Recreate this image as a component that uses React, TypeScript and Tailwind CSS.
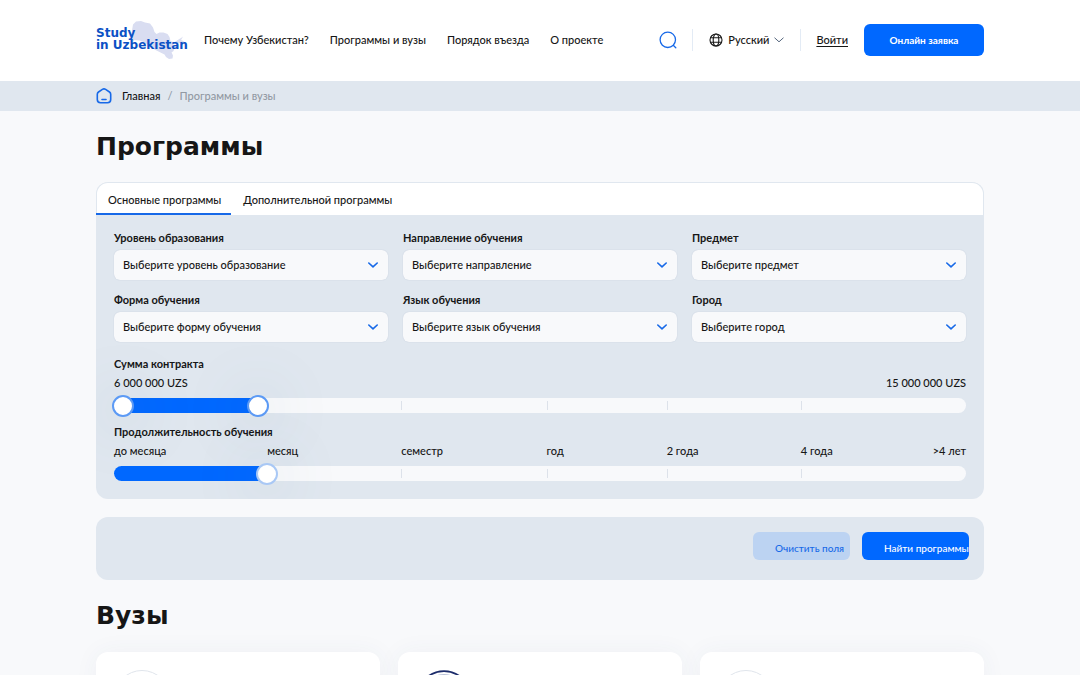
import { useState } from "react";
import type { ReactNode } from "react";

const NAV_LINKS = ["Почему Узбекистан?", "Программы и вузы", "Порядок въезда", "О проекте"];

const FILTERS = [
  { id: "level", label: "Уровень образования", placeholder: "Выберите уровень образование" },
  { id: "direction", label: "Направление обучения", placeholder: "Выберите направление" },
  { id: "subject", label: "Предмет", placeholder: "Выберите предмет" },
  { id: "form", label: "Форма обучения", placeholder: "Выберите форму обучения" },
  { id: "language", label: "Язык обучения", placeholder: "Выберите язык обучения" },
  { id: "city", label: "Город", placeholder: "Выберите город" },
];

const TABS = ["Основные программы", "Дополнительной программы"];

const SCALE = "grid grid-cols-[153fr_134fr_145fr_120fr_134fr_165fr]";

const RANGE =
  "pointer-events-none absolute -left-0.5 top-1/2 m-0 h-[22px] w-[calc(100%+4px)] -translate-y-1/2 appearance-none bg-transparent [&::-webkit-slider-thumb]:pointer-events-auto [&::-webkit-slider-thumb]:size-[22px] [&::-webkit-slider-thumb]:appearance-none [&::-webkit-slider-thumb]:rounded-full [&::-webkit-slider-thumb]:border-2 [&::-webkit-slider-thumb]:bg-white [&::-webkit-slider-thumb]:shadow-[0_4px_60px_rgba(90,120,150,0.4)]";

function Logo() {
  return (
    <a href="#" className="relative block h-10 w-[90px] font-['DejaVu_Sans',sans-serif] text-xs leading-3 font-bold text-[#0b51c5]">
      <svg viewBox="0 0 90 40" className="absolute inset-0 h-full w-full" fill="#d9ddf1" aria-hidden="true">
        <path d="M37 4.500 40 1.500l5-.5 4 1.500 5 1 3 4 1.500 4.500 2 2 3-1.500 4 0 4 1.500 2 3 1 4 3.500 1.500 3-2 4-2.500 2-1.500-2 3.500 3.500 1.500-5 1.500-5 .5-2 2 2 2.500-1 3-2 1.500 1.500 3-.5 3-3.500.5-3-2-1.500-2.500-5-2.500-5-2.500-6-4.500-5-3-4-1.500-5-.5-1.500 1.500-2-5Z" />
      </svg>
      <span className="relative block pt-[7px] whitespace-nowrap">
        Study
        <br />
        in Uzbekistan
      </span>
    </a>
  );
}

function SearchIcon() {
  return (
    <svg viewBox="0 0 18 18" className="size-[18px]" fill="none" stroke="#1769e8" strokeWidth="1.3" strokeLinecap="round">
      <circle cx="8.8" cy="8.8" r="7.7" />
      <path d="m14.5 14.5 2.3 2.3" />
    </svg>
  );
}

function GlobeIcon() {
  return (
    <svg viewBox="0 0 14 14" className="size-3.5" fill="none" stroke="#1a1a1a" strokeWidth="1.1" aria-hidden="true">
      <circle cx="7" cy="7" r="6" />
      <ellipse cx="7" cy="7" rx="2.8" ry="6" />
      <path d="M1.6 4.8h10.8M1.6 9.2h10.8" />
    </svg>
  );
}

function HomeIcon() {
  return (
    <svg viewBox="0 0 16 16" className="size-4" fill="none" stroke="#1769e8" strokeWidth="1.6" strokeLinecap="round" strokeLinejoin="round">
      <path d="M1.3 6.3c0-1 .4-1.7 1.2-2.3L6.4 1.4c1-.6 2.2-.6 3.2 0L13.500 4c.8.6 1.200 1.300 1.200 2.300v5.200c0 2-1.200 3.200-3.200 3.200h-7c-2 0-3.200-1.200-3.200-3.200Z" />
      <path d="M6 11.500h4" />
    </svg>
  );
}

function Chevron({ className }: { className: string }) {
  return (
    <svg viewBox="0 0 10 6" className={className} fill="none" stroke="currentColor" strokeLinecap="round" strokeLinejoin="round" aria-hidden="true">
      <path d="m.8 1 4.200 3.800L9.200 1" />
    </svg>
  );
}

function Header() {
  return (
    <header className="bg-white px-24 pb-px">
      <div className="flex h-20 items-center">
        <Logo />
        <nav className="ml-[18px] flex gap-[21px] font-medium">
          {NAV_LINKS.map((link) => (
            <a key={link} href="#" className="whitespace-nowrap">
              {link}
            </a>
          ))}
        </nav>
        <div className="ml-auto flex items-center">
          <button type="button" aria-label="Поиск">
            <SearchIcon />
          </button>
          <button type="button" className="ml-[15px] flex h-[22px] items-center border-x border-[#e3ebf5] px-4 font-medium">
            <GlobeIcon />
            <span className="mx-[5px]">Русский</span>
            <Chevron className="h-1.5 w-2.5 text-[#54657c]" />
          </button>
          <a href="#" className="ml-[15px] font-medium underline underline-offset-2">
            Войти
          </a>
          <button type="button" className="ml-4 h-8 w-[120px] rounded-md bg-[#0068ff] text-[10px] font-bold text-white">
            Онлайн заявка
          </button>
        </div>
      </div>
    </header>
  );
}

function Breadcrumbs() {
  return (
    <nav className="flex h-[30px] items-center bg-[#e0e7ef] px-24 font-medium">
      <a href="#" aria-label="Главная">
        <HomeIcon />
      </a>
      <a href="#" className="ml-2.5">
        Главная
      </a>
      <span className="mx-[7px] text-[#8f9aa8]">/</span>
      <span className="text-[#9299a3]">Программы и вузы</span>
    </nav>
  );
}

function Select({ id, label, placeholder }: { id: string; label: string; placeholder: string }) {
  return (
    <div>
      <label htmlFor={id} className="block leading-4 font-bold">
        {label}
      </label>
      <div className="relative mt-1">
        <select id={id} className="block h-[30px] w-full appearance-none rounded-md bg-[#f8f9fb] px-[9px] shadow-[0_0_1px_rgba(120,140,170,0.4)]">
          <option>{placeholder}</option>
        </select>
        <Chevron className="pointer-events-none absolute top-3 right-2.5 h-1.5 w-2.5 stroke-[1.6] text-[#1769e8]" />
      </div>
    </div>
  );
}

function Track({ fill, children }: { fill: number; children: ReactNode }) {
  return (
    <div className="relative mt-[7px] h-[15px] rounded-full bg-[#f8f9fb]">
      <div className={`${SCALE} h-full items-center`}>
        <span className="col-span-2" />
        <span className="h-[9px] border-l border-[#dde2ea]" />
        <span className="h-[9px] border-l border-[#dde2ea]" />
        <span className="h-[9px] border-l border-[#dde2ea]" />
        <span className="h-[9px] border-l border-[#dde2ea]" />
      </div>
      <div className="absolute inset-y-0 left-0 rounded-l-full bg-[#0068ff]" style={{ width: `${fill}%` }} />
      {children}
    </div>
  );
}

function ContractSlider() {
  const [from, setFrom] = useState(0);
  const [to, setTo] = useState(162);

  return (
    <fieldset className="mt-3.5">
      <legend className="leading-4 font-bold">Сумма контракта</legend>
      <div className="mt-[3px] flex justify-between leading-4">
        <span>6 000 000 UZS</span>
        <span>15 000 000 UZS</span>
      </div>
      <Track fill={to / 10 + 1}>
        <input
          type="range"
          aria-label="Сумма от"
          max={1000}
          value={from}
          onChange={(e) => setFrom(Math.min(Number(e.target.value), to))}
          className={`${RANGE} [&::-webkit-slider-thumb]:border-[#5c9af5]`}
        />
        <input
          type="range"
          aria-label="Сумма до"
          max={1000}
          value={to}
          onChange={(e) => setTo(Math.max(Number(e.target.value), from))}
          className={`${RANGE} [&::-webkit-slider-thumb]:border-[#5c9af5]`}
        />
      </Track>
    </fieldset>
  );
}

function DurationSlider() {
  const [duration, setDuration] = useState(173);

  return (
    <div className="mt-[11px]">
      <label htmlFor="duration" className="block leading-4 font-bold">
        Продолжительность обучения
      </label>
      <div className={`${SCALE} mt-[3px] leading-4`}>
        <span>до месяца</span>
        <span>месяц</span>
        <span>семестр</span>
        <span>год</span>
        <span>2 года</span>
        <span className="flex justify-between">
          <span>4 года</span>
          <span>&gt;4 лет</span>
        </span>
      </div>
      <Track fill={duration / 10 + 1}>
        <input
          id="duration"
          type="range"
          max={1000}
          value={duration}
          onChange={(e) => setDuration(Number(e.target.value))}
          className={`${RANGE} [&::-webkit-slider-thumb]:border-[#a9c8f5]`}
        />
      </Track>
    </div>
  );
}

function ProgramFilter() {
  const [tab, setTab] = useState(0);

  return (
    <form>
      <div className="overflow-hidden rounded-xl bg-[#e0e7ef]">
        <div className="flex rounded-t-xl border border-b-0 border-[#e0e7ef] bg-white">
          {TABS.map((name, i) => (
            <button
              key={name}
              type="button"
              onClick={() => setTab(i)}
              className={`h-8 border-b-2 pt-1 pr-2.5 pl-3 font-medium ${i === tab ? "-ml-px border-[#1769e8]" : "border-transparent"}`}
            >
              {name}
            </button>
          ))}
        </div>
        <div className="px-[18px] pt-[15px] pb-[18px] font-medium">
          <div className="grid grid-cols-3 gap-x-[15px] gap-y-3">
            {FILTERS.map((filter) => (
              <Select key={filter.id} {...filter} />
            ))}
          </div>
          <ContractSlider />
          <DurationSlider />
        </div>
      </div>
      <div className="mt-[18px] flex h-[63px] justify-end gap-3 rounded-xl bg-[#e0e7ef] px-[15px] pt-[15px] text-[10px] font-medium">
        <button type="reset" className="h-7 w-[97px] rounded-md bg-[#bcd3f2] pt-1 pl-[22px] text-left whitespace-nowrap text-[#1769e8]">
          Очистить поля
        </button>
        <button type="submit" className="h-7 w-[107px] rounded-md bg-[#0068ff] pt-1 pl-[22px] text-left whitespace-nowrap text-white">
          Найти программы
        </button>
      </div>
    </form>
  );
}

function UniversityCard({ accent }: { accent?: boolean }) {
  return (
    <article className="rounded-xl bg-white p-[18px] shadow-[0_0_24px_rgba(60,80,110,0.05)]">
      <svg viewBox="0 0 56 56" className="size-14" fill="none" aria-hidden="true">
        {accent ? (
          <>
            <circle cx="28" cy="28" r="26.800" stroke="#1c2c6b" strokeWidth="1.800" />
            <circle cx="28" cy="28" r="23.500" stroke="#b8c0d8" strokeWidth="1" />
          </>
        ) : (
          <circle cx="28" cy="28" r="27.500" stroke="#e0e5ec" />
        )}
      </svg>
    </article>
  );
}

export default function App() {
  return (
    <div className="h-screen overflow-hidden bg-[#f8f9fb] font-['Lato',sans-serif] text-[11px] text-[#161616]">
      <Header />
      <Breadcrumbs />
      <main className="px-24">
        <h1 className="pt-[21px] pb-5 font-['DejaVu_Sans',sans-serif] text-[25px] leading-[30px] font-bold">Программы</h1>
        <ProgramFilter />
        <h2 className="pt-[21px] pb-[21px] font-['DejaVu_Sans',sans-serif] text-[25px] leading-[30px] font-bold">Вузы</h2>
        <div className="grid grid-cols-3 gap-[18px]">
          <UniversityCard />
          <UniversityCard accent />
          <UniversityCard />
        </div>
      </main>
    </div>
  );
}
